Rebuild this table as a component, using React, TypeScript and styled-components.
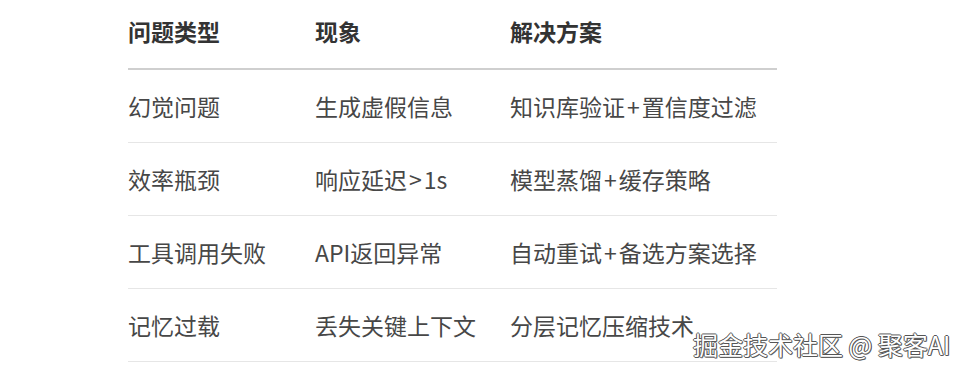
import styled, { createGlobalStyle } from 'styled-components';

const GlobalStyle = createGlobalStyle`
  html, body {
    margin: 0;
    padding: 0;
    background: #ffffff;
  }
  body {
    font-family: "Noto Sans CJK SC", "Noto Sans", sans-serif;
  }
`;

const Page = styled.div`
  position: relative;
  width: 965px;
  height: 374px;
  overflow: hidden;
  background: #ffffff;
`;

const Table = styled.div`
  display: grid;
  grid-template-columns: 187px 195px 1fr;
  width: 649px;
  margin-left: 128px;
`;

const Cell = styled.div<{ $head?: boolean }>`
  display: flex;
  align-items: center;
  height: ${(p) => (p.$head ? '62px' : '72px')};
  padding-bottom: ${(p) => (p.$head ? '6px' : '0')};
  border-bottom: ${(p) => (p.$head ? '2px solid #cfcfcf' : '1px solid #e6e6e6')};
  font-size: 23px;
  font-weight: ${(p) => (p.$head ? 700 : 400)};
  color: ${(p) => (p.$head ? '#333333' : '#474747')};
  white-space: nowrap;
`;

const Op = styled.span`
  margin: 0 2px;
`;

const Watermark = styled.div`
  position: absolute;
  left: 693px;
  top: 326px;
  font-size: 25px;
  color: #ffffff;
  font-family: "Noto Sans CJK SC", sans-serif;
  text-shadow: 1px 0 #555, -1px 0 #555, 0 1px #555, 0 -1px #555, 1px 1px #777;
  white-space: nowrap;
`;

const headers = ['问题类型', '现象', '解决方案'];

const rows = [
  ['幻觉问题', '生成虚假信息', '知识库验证+置信度过滤'],
  ['效率瓶颈', '响应延迟>1s', '模型蒸馏+缓存策略'],
  ['工具调用失败', 'API返回异常', '自动重试+备选方案选择'],
  ['记忆过载', '丢失关键上下文', '分层记忆压缩技术'],
];

// give "+" and ">" a little breathing room like the source font does
function renderText(text: string) {
  const parts = text.split(/([+>])/);
  return parts.map((p, i) => (p === '+' || p === '>' ? <Op key={i}>{p}</Op> : p));
}

function App() {
  return (
    <Page>
      <GlobalStyle />
      <Table>
        {headers.map((h) => (
          <Cell key={h} $head>
            {h}
          </Cell>
        ))}
        {rows.map((row) =>
          row.map((c, i) => <Cell key={row[0] + i}>{renderText(c)}</Cell>)
        )}
      </Table>
      <Watermark>掘金技术社区 @ 聚客AI</Watermark>
    </Page>
  );
}

export default App;
